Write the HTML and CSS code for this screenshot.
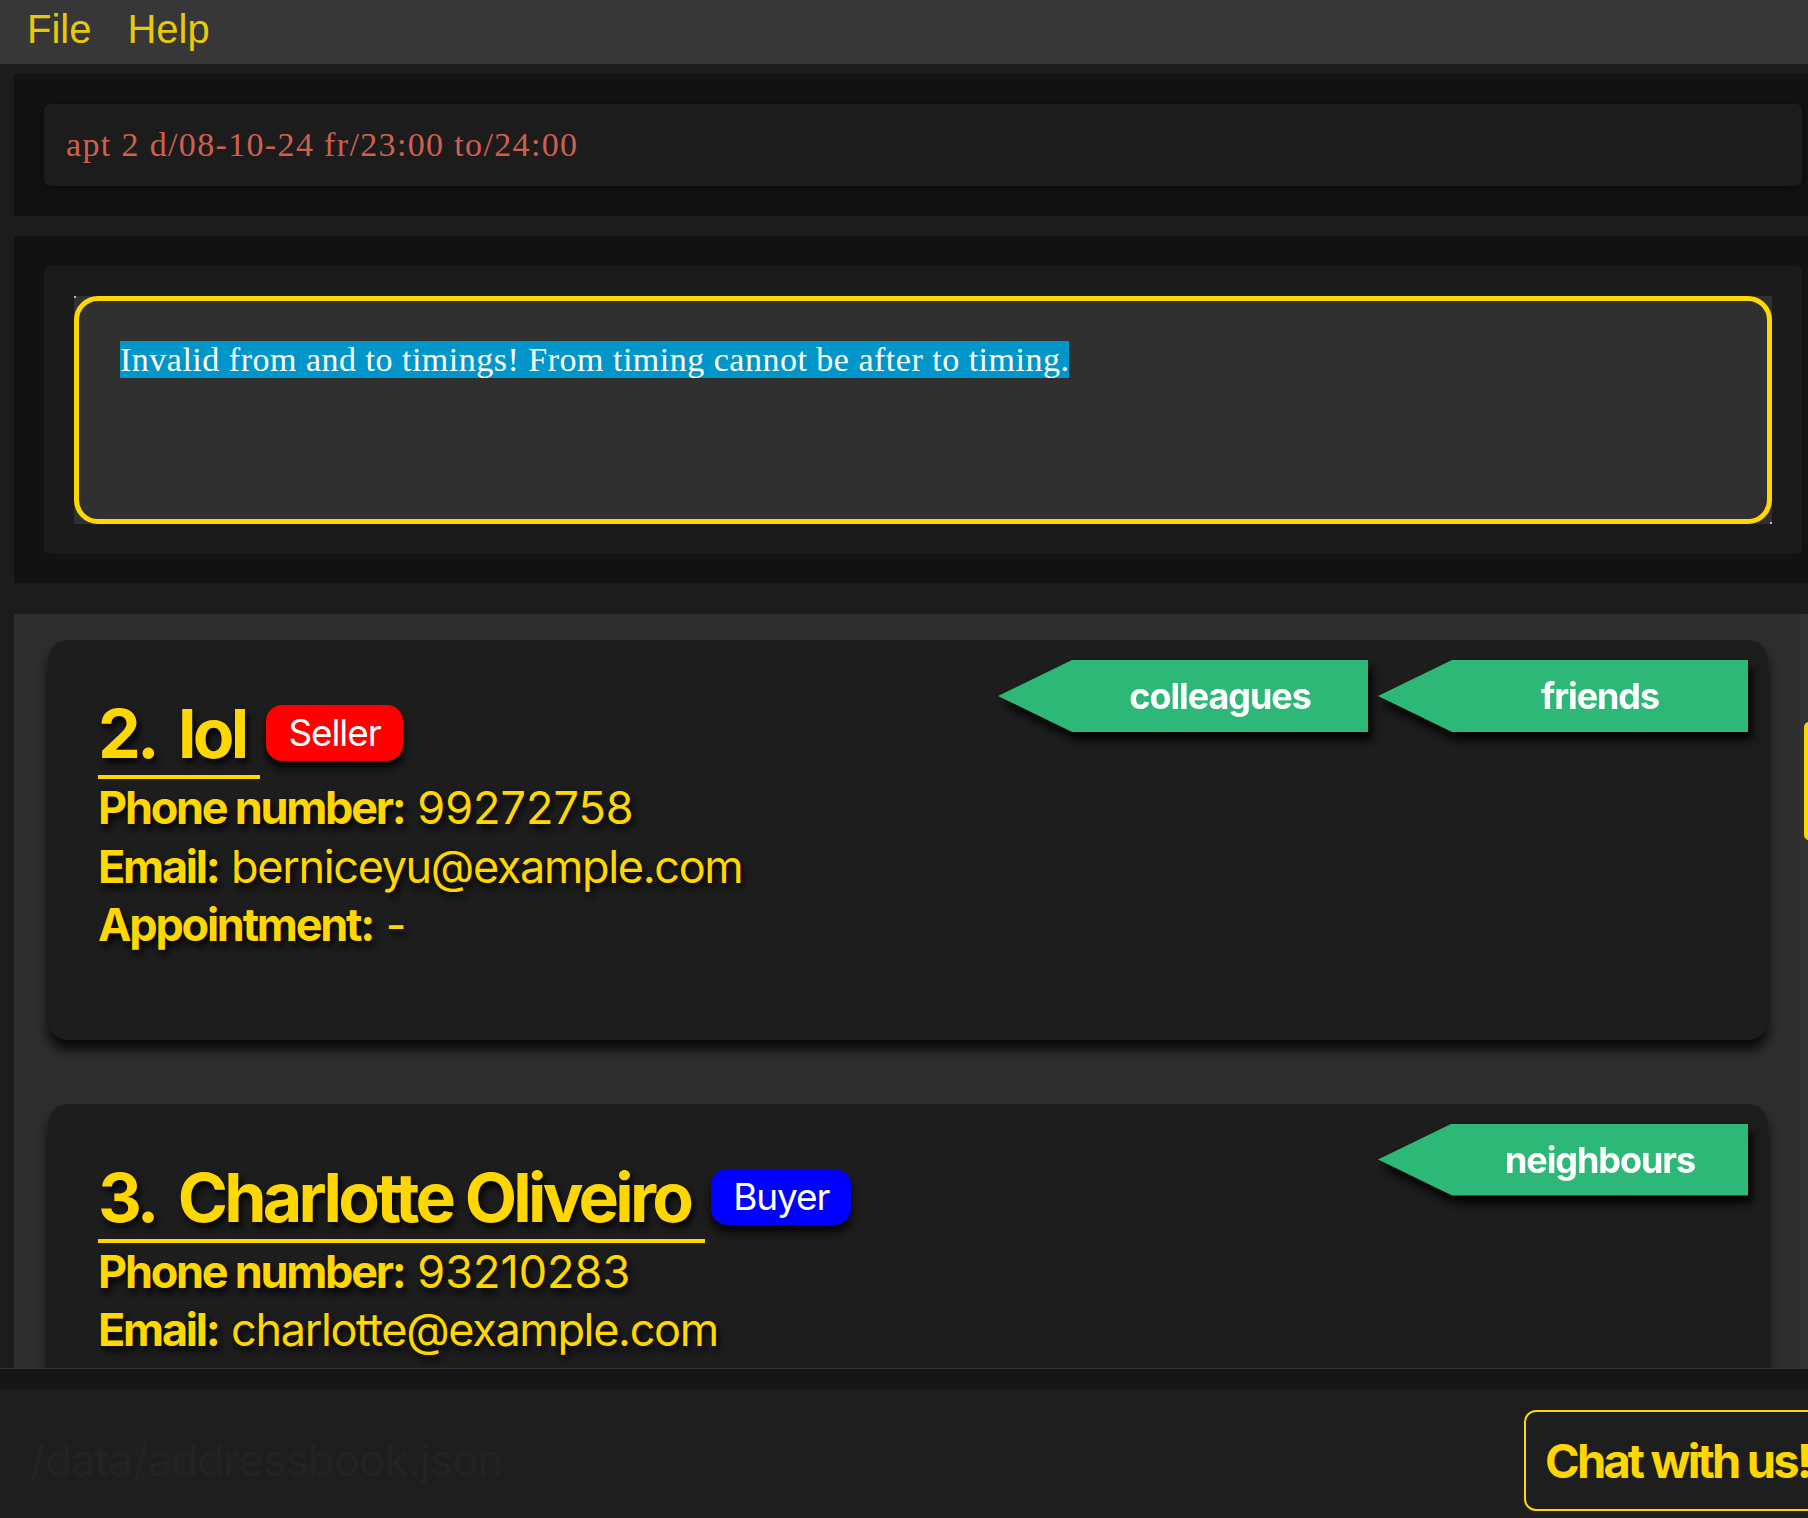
FILE: index.html
```html
<!DOCTYPE html>
<html lang="en">
<head>
<meta charset="utf-8">
<title>AddressBook</title>
<link rel="stylesheet" href="styles.css">
</head>
<body>
<div class="app">
  <div class="menubar">
    <span class="menu-item">File</span>
    <span class="menu-item">Help</span>
  </div>

  <div class="panel command-panel">
    <div class="command-field">apt 2 d/08-10-24 fr/23:00 to/24:00</div>
  </div>

  <div class="panel result-panel">
    <div class="result-inner">
      <div class="result-box-bg">
        <div class="result-box"><span class="selected">Invalid from and to timings! From timing cannot be after to timing.</span></div>
      </div>
    </div>
  </div>

  <div class="list-panel">
    <div class="list-content">
      <div class="card">
        <div class="card-main">
          <div class="title-row">
            <div class="title"><span class="pid">2.</span><span class="pname">lol</span></div>
            <span class="badge seller">Seller</span>
          </div>
          <div class="field"><span class="label">Phone number:</span> <span class="value phone">99272758</span></div>
          <div class="field"><span class="label">Email:</span> <span class="value email">berniceyu@example.com</span></div>
          <div class="field"><span class="label">Appointment:</span> <span class="value">-</span></div>
        </div>
        <div class="tags">
          <div class="tag-wrap"><div class="tag">colleagues</div></div>
          <div class="tag-wrap"><div class="tag">friends</div></div>
        </div>
      </div>

      <div class="card">
        <div class="card-main">
          <div class="title-row">
            <div class="title"><span class="pid">3.</span><span class="pname">Charlotte Oliveiro</span></div>
            <span class="badge buyer">Buyer</span>
          </div>
          <div class="field"><span class="label">Phone number:</span> <span class="value phone">93210283</span></div>
          <div class="field"><span class="label">Email:</span> <span class="value email">charlotte@example.com</span></div>
        </div>
        <div class="tags">
          <div class="tag-wrap"><div class="tag">neighbours</div></div>
        </div>
      </div>
    </div>
    <div class="scrollbar"><div class="thumb"></div></div>
  </div>

  <div class="band"></div>

  <div class="status">
    <div class="status-path">/data/addressbook.json</div>
    <div class="chat-btn">Chat with us!</div>
  </div>
</div>
</body>
</html>
```
FILE: styles.css
```css
html, body {
  margin: 0;
  padding: 0;
}
body {
  width: 1808px;
  height: 1518px;
  overflow: hidden;
  background: #1c1c1c;
  font-family: Inter, "Liberation Sans", sans-serif;
}
.app {
  display: flex;
  flex-direction: column;
  width: 1808px;
  height: 1518px;
}

/* menu */
.menubar {
  height: 64px;
  flex: 0 0 64px;
  background: #373737;
  display: flex;
  padding-left: 9px;
  box-sizing: border-box;
}
.menu-item {
  font-family: "Liberation Sans", Arial, sans-serif;
  font-size: 40px;
  line-height: 59px;
  color: #e8c80c;
  padding: 0 18px;
}

/* panels */
.panel {
  background: #121212;
  margin-left: 14px;
  box-sizing: border-box;
}
.command-panel {
  margin-top: 10px;
  height: 142px;
  flex: 0 0 142px;
  padding: 30px 6px 0 30px;
}
.command-field {
  height: 82px;
  background: #1c1c1c;
  border-radius: 6px;
  box-shadow: 0 2px 6px rgba(0,0,0,0.5);
  padding-left: 22px;
  font-family: "Liberation Serif", "Times New Roman", serif;
  font-size: 34px;
  line-height: 82px;
  letter-spacing: 1.35px;
  color: #d0604e;
  white-space: nowrap;
}
.result-panel {
  margin-top: 20px;
  height: 347px;
  flex: 0 0 347px;
  padding: 30px 6px 0 30px;
}
.result-inner {
  height: 288px;
  box-sizing: border-box;
  background: #1b1b1b;
  border-radius: 6px;
  padding: 30px;
}
.result-box-bg {
  background: #303030;
  height: 228px;
  position: relative;
}
.result-box-bg::before,
.result-box-bg::after {
  content: "";
  position: absolute;
  width: 2px;
  height: 2px;
  background: #bdbdbd;
}
.result-box-bg::before { left: 0; top: 0; }
.result-box-bg::after { right: 0; bottom: 0; }
.result-box {
  height: 100%;
  box-sizing: border-box;
  border: 5px solid #ffd700;
  border-radius: 24px;
  padding: 40px 36px 40px 41px;
  font-family: "Liberation Serif", "Times New Roman", serif;
  font-size: 34px;
  letter-spacing: 0.5px;
  color: #ffffff;
}
.selected {
  background: #0096c9;
  color: #ffffff;
}

/* list */
.list-panel {
  margin-top: 31px;
  margin-left: 14px;
  height: 754px;
  flex: 0 0 754px;
  background: #2e2e2e;
  display: flex;
  overflow: hidden;
}
.list-content {
  flex: 1;
  padding: 26px 32px 0 34px;
}
.scrollbar {
  flex: 0 0 8px;
  background: #333333;
  overflow: hidden;
  padding-top: 108px;
}
.thumb {
  margin-left: 4px;
  width: 12px;
  height: 118px;
  border-radius: 5px;
  background: #ffd700;
}

.card {
  background: #1d1d1d;
  border-radius: 20px;
  box-shadow: 0 10px 12px rgba(0,0,0,0.8);
  padding: 20px 20px 85px 50px;
  margin-bottom: 64px;
  display: flex;
  justify-content: space-between;
  align-items: flex-start;
  color: #ffd700;
}
.card-main {
  padding-top: 39px;
}
.title-row {
  display: flex;
  align-items: flex-start;
}
.title {
  font-weight: 700;
  font-size: 68px;
  line-height: 68px;
  letter-spacing: -0.055em;
  padding-right: 15px;
  padding-bottom: 8px;
  border-bottom: 4px solid #ffd700;
  text-shadow: 3px 5px 7px rgba(0,0,0,0.9);
  white-space: nowrap;
}
.pid {
  margin-right: 22px;
}
.badge {
  margin-left: 6px;
  margin-top: 6px;
  height: 56px;
  line-height: 56px;
  padding: 0 22px;
  border-radius: 16px;
  font-size: 37px;
  letter-spacing: -0.03em;
  color: #ffffff;
  box-shadow: 0 7px 9px rgba(0,0,0,0.85);
}
.seller { background: #ff0000; }
.buyer { background: #0000ff; }

.field {
  font-size: 45px;
  line-height: 58.5px;
  white-space: nowrap;
  text-shadow: 3px 5px 7px rgba(0,0,0,0.9);
}
.label {
  font-weight: 700;
  letter-spacing: -0.05em;
}
.value {
  font-weight: 400;
  letter-spacing: -0.015em;
}
.value.phone {
  letter-spacing: 0;
}
.value.email {
  letter-spacing: -0.03em;
}

.tags {
  display: flex;
  gap: 10px;
}
.tag-wrap {
  filter: drop-shadow(4px 8px 5px rgba(0,0,0,0.9));
}
.tag {
  width: 296px;
  height: 72px;
  padding-left: 74px;
  background: #2eb877;
  clip-path: polygon(74px 0, 100% 0, 100% 100%, 74px 100%, 0 50%);
  color: #ffffff;
  font-weight: 700;
  font-size: 36px;
  line-height: 72px;
  letter-spacing: -0.03em;
  text-align: center;
}

/* bottom */
.band {
  flex: 0 0 21px;
  height: 21px;
  box-sizing: border-box;
  background: #161616;
  border-top: 1px solid #333333;
}
.status {
  flex: 1;
  background: #1e1e1e;
  display: flex;
  align-items: flex-start;
  padding-left: 30px;
  padding-top: 21px;
  box-sizing: border-box;
}
.status-path {
  flex: 0 0 1494px;
  padding-top: 26px;
  font-size: 44px;
  line-height: 48px;
  color: #232323;
  letter-spacing: -0.02em;
}
.chat-btn {
  flex: 0 0 auto;
  border: 2px solid #ffd700;
  border-radius: 12px;
  padding: 0 22px 0 19px;
  font-weight: 700;
  font-size: 47px;
  line-height: 97px;
  color: #ffd700;
  white-space: nowrap;
  letter-spacing: -0.06em;
}
```
